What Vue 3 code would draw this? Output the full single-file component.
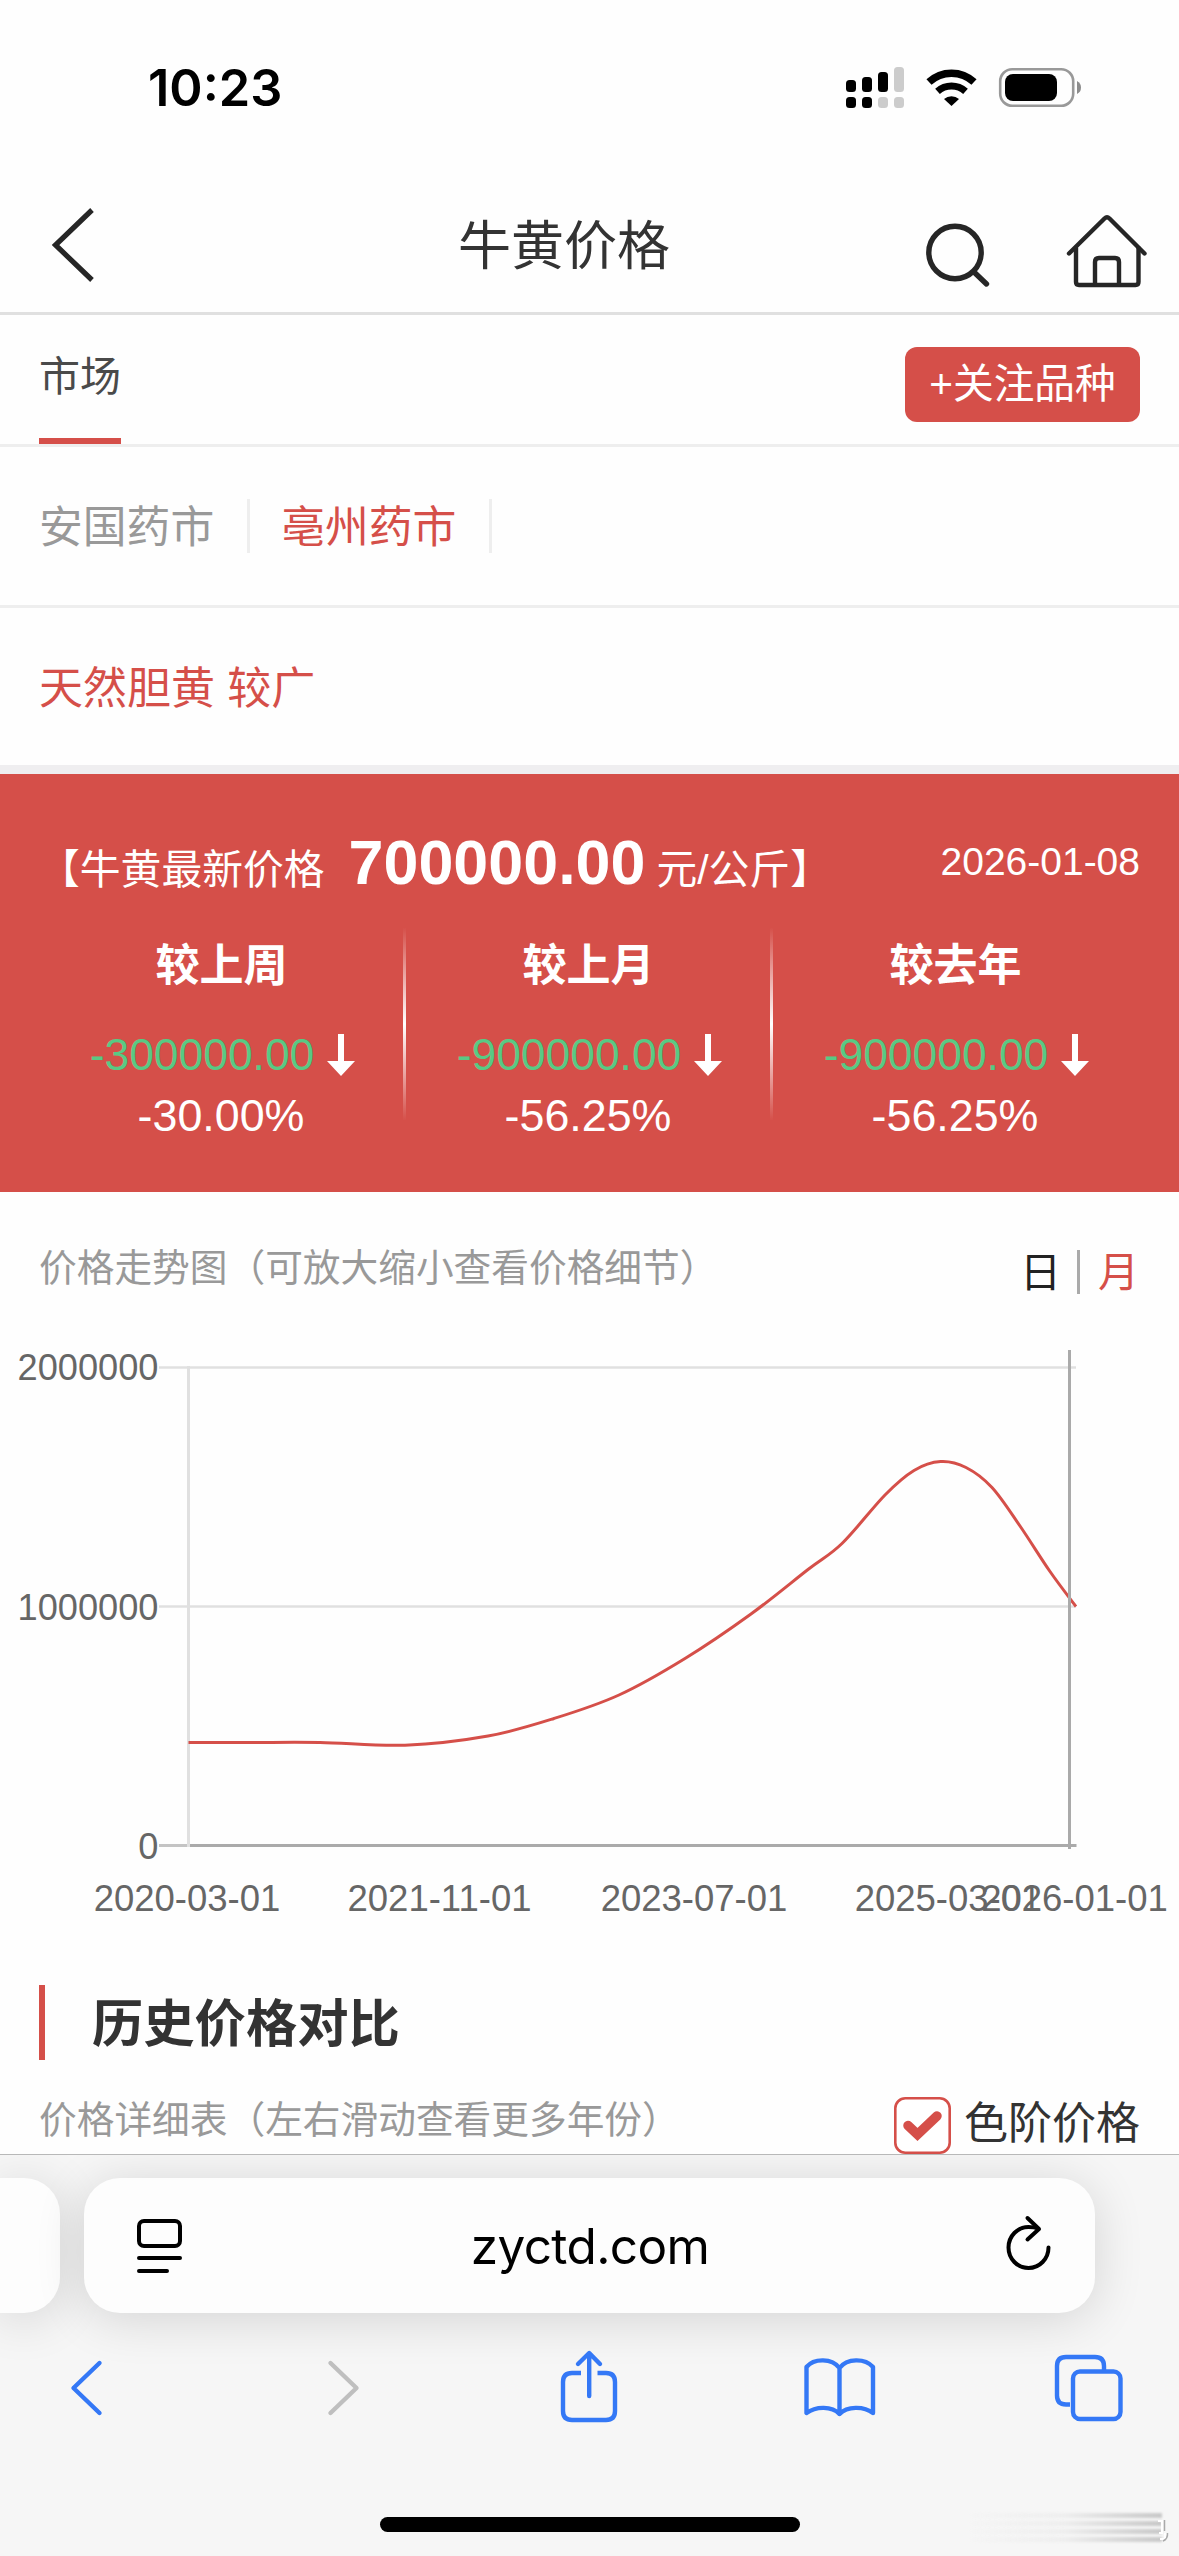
<template>
  <div class="page">
    <div class="status-bar">
      <span class="time">10:23</span>
      <svg class="status-icons" width="236" height="42" viewBox="846 66 236 42">
        <g fill="#000">
          <rect x="846" y="80" width="10" height="12" rx="3.5" />
          <rect x="862" y="77" width="10" height="15" rx="3.5" />
          <rect x="878" y="72" width="10" height="20" rx="3.5" />
          <rect x="846" y="97" width="10" height="11" rx="3.5" />
          <rect x="862" y="97" width="10" height="11" rx="3.5" />
        </g>
        <g fill="#ccc">
          <rect x="894" y="67" width="10" height="25" rx="3.5" />
          <rect x="878" y="97" width="10" height="11" rx="3.5" />
          <rect x="894" y="97" width="10" height="11" rx="3.5" />
        </g>
        <path d="M929 82 A33 33 0 0 1 974 82" fill="none" stroke="#000" stroke-width="7.5" />
        <path d="M937.5 91.3 A21 21 0 0 1 965.5 91.3" fill="none" stroke="#000" stroke-width="7" />
        <path d="M944 99 A11.5 11.5 0 0 1 959 99 L951.5 106 Z" fill="#000" />
        <rect x="1000.2" y="69.2" width="73" height="36.6" rx="12" fill="none" stroke="#999" stroke-width="2.6" />
        <rect x="1005" y="74" width="52" height="27" rx="8" fill="#000" />
        <path d="M1077 81 Q1081 83 1081 87.5 Q1081 92 1077 94 Z" fill="#8c8c8c" />
      </svg>
    </div>

    <header class="header">
      <svg class="back" width="46" height="78" viewBox="50 206 46 78">
        <path d="M92 210 L55.5 245 L92 280" fill="none" stroke="#262626" stroke-width="5.2" />
      </svg>
      <h1 class="title">牛黄价格</h1>
      <svg class="header-icons" width="226" height="78" viewBox="925 212 226 78">
        <g fill="none" stroke="#262626" stroke-width="5.4" stroke-linecap="round">
          <circle cx="955" cy="252.5" r="26.2" />
          <path d="M975 273 L986.5 284" />
        </g>
        <g fill="none" stroke="#262626" stroke-width="4.4" stroke-linecap="round" stroke-linejoin="round">
          <path d="M1069 253.5 L1104.5 218.5 Q1107 216 1109.5 218.5 L1144.5 253.5" />
          <path d="M1076 248 V282 Q1076 285 1079 285 H1135.5 Q1138.5 285 1138.5 282 V248" />
          <path d="M1095 284 V262 Q1095 258 1099 258 H1115 Q1119 258 1119 262 V284" />
        </g>
      </svg>
    </header>

    <div class="tabs">
      <div class="tab">市场</div>
      <button class="follow">+关注品种</button>
    </div>

    <div class="markets">
      <span
        v-for="market in markets"
        :key="market"
        :class="['market', { active: market === currentMarket }]"
      >{{ market }}</span>
    </div>

    <div class="specs">天然胆黄 较广</div>

    <section class="price-card">
      <div class="price-row">
        <div class="price-main">
          <span>【牛黄最新价格</span>
          <strong>700000.00</strong>
          <span>元/公斤】</span>
        </div>
        <span class="price-date">2026-01-08</span>
      </div>
      <div class="compare">
        <div v-for="item in compares" :key="item.label" class="compare-item">
          <div class="compare-label">{{ item.label }}</div>
          <div class="compare-value">
            <span>{{ item.value }}</span>
            <svg width="30" height="44" viewBox="0 0 30 44">
              <path d="M12 1 H18 V28 H29 L15 43 L1 28 H12 Z" fill="#fff" />
            </svg>
          </div>
          <div class="compare-percent">{{ item.percent }}</div>
        </div>
      </div>
    </section>

    <div class="chart-head">
      <span class="hint">价格走势图（可放大缩小查看价格细节）</span>
      <div class="switch">
        <span>日</span><i></i><span class="on">月</span>
      </div>
    </div>

    <svg class="chart" width="1179" height="600" viewBox="0 1340 1179 600">
      <g stroke="#e0e0e0" stroke-width="2.6">
        <line x1="159" y1="1367.5" x2="1076" y2="1367.5" />
        <line x1="159" y1="1606.5" x2="1076" y2="1606.5" />
      </g>
      <line x1="159" y1="1845.5" x2="189" y2="1845.5" stroke="#c4c4c4" stroke-width="3" />
      <line x1="189" y1="1845.5" x2="1076.5" y2="1845.5" stroke="#aaa" stroke-width="3" />
      <line x1="188.5" y1="1366" x2="188.5" y2="1847" stroke="#e0e0e0" stroke-width="3" />
      <path :d="linePath" fill="none" stroke="#d54f49" stroke-width="3" />
      <line x1="1069.5" y1="1350" x2="1069.5" y2="1849" stroke="#aaa" stroke-width="3" />
      <text
        v-for="tick in yTicks"
        :key="tick.label"
        x="158.5"
        :y="tick.y"
        class="y-label"
      >{{ tick.label }}</text>
      <text
        v-for="tick in xTicks"
        :key="tick.label"
        :x="tick.x"
        y="1910.5"
        class="x-label"
      >{{ tick.label }}</text>
    </svg>

    <h2 class="section-title">历史价格对比</h2>

    <div class="table-head">
      <span class="hint">价格详细表（左右滑动查看更多年份）</span>
      <label class="color-price">
        <svg width="57" height="57" viewBox="0 0 57 57">
          <rect x="1.3" y="1.3" width="54.4" height="54.4" rx="10" fill="#fff" stroke="#d54f49" stroke-width="2.6" />
          <path d="M14 28.5 L23.5 37.5 L43 19" fill="none" stroke="#d54f49" stroke-width="9.5" stroke-linecap="round" />
        </svg>
        <span>色阶价格</span>
      </label>
    </div>

    <footer class="toolbar">
      <div class="address-row">
        <div class="prev-tab"></div>
        <div class="address">
          <svg width="45" height="54" viewBox="0 0 45 54">
            <g fill="none" stroke="#000" stroke-width="4" stroke-linecap="round">
              <rect x="2" y="2" width="41" height="25" rx="5" />
              <path d="M2 39 H43 M2 52 H30" />
            </g>
          </svg>
          <span class="domain">zyctd.com</span>
          <svg class="reload" width="46" height="56" viewBox="0 0 46 56">
            <g fill="none" stroke="#000" stroke-width="4" stroke-linecap="round" stroke-linejoin="round">
              <path d="M42.5 32.5 A20 20.5 0 1 1 22.5 12 Q28 12 32 13.5" />
              <path d="M21.5 3 L33 14 L21.5 24.5" />
            </g>
          </svg>
        </div>
      </div>
      <svg class="nav" width="1179" height="80" viewBox="0 2346 1179 80">
        <g fill="none" stroke="#3478f6" stroke-width="4.4" stroke-linecap="round" stroke-linejoin="round">
          <path d="M99.5 2363 L73.5 2388 L99.5 2413" />
          <path d="M330.5 2363 L356.5 2388 L330.5 2413" stroke="#bfbfbf" />
          <path d="M581 2373 H572 Q563 2373 563 2382 V2411 Q563 2420 572 2420 H606 Q615 2420 615 2411 V2382 Q615 2373 606 2373 H597.5" stroke-linecap="butt" />
          <path d="M589.2 2396 V2354 M578 2364 L589.2 2353 L600 2364" />
          <path d="M839.5 2414 C832 2406 816 2406 806.5 2413 V2367 C814 2358 832 2358 839.5 2368 C847 2358 865 2358 873 2367 V2413 C864 2406 847 2406 839.5 2414 Z M839.5 2368 V2414" />
          <path d="M1070 2404.5 H1066 Q1057 2404.5 1057 2395.5 V2366 Q1057 2357 1066 2357 H1095 Q1104 2357 1104 2366 V2370" stroke-linecap="butt" />
          <rect x="1073" y="2371.5" width="47.5" height="47.5" rx="7" />
        </g>
      </svg>
      <div class="home-row">
        <div class="home-indicator"></div>
        <div class="smudge">
          <i></i><i></i><i></i><i></i>
          <svg width="14" height="28" viewBox="0 0 14 28">
            <path d="M2 4 H6 V16 H3 M4 22 H9 V16" fill="none" stroke="#fff" stroke-width="2" />
            <path d="M8.5 3 V14 M11.5 16 Q12 22 7 24" fill="none" stroke="#aaa" stroke-width="1.5" />
          </svg>
        </div>
      </div>
    </footer>
  </div>
</template>

<script setup>
import { computed, ref } from 'vue';

const markets = ['安国药市', '亳州药市'];
const currentMarket = ref('亳州药市');

const compares = [
  { label: '较上周', value: '-300000.00', percent: '-30.00%' },
  { label: '较上月', value: '-900000.00', percent: '-56.25%' },
  { label: '较去年', value: '-900000.00', percent: '-56.25%' },
];

const yTicks = [
  { label: '2000000', y: 1380 },
  { label: '1000000', y: 1619.5 },
  { label: '0', y: 1858.5 },
];

const xTicks = [
  { label: '2020-03-01', x: 187 },
  { label: '2021-11-01', x: 439.5 },
  { label: '2023-07-01', x: 694 },
  { label: '2025-03-01', x: 948 },
  { label: '2026-01-01', x: 1074.5 },
];

const points = [
  [188.5, 1742.5], [250, 1742.5], [320, 1742.5], [405, 1745.2], [488, 1736],
  [554, 1718.5], [619, 1695], [685, 1658.5], [751, 1614], [808, 1569.5],
  [842, 1543.5], [885, 1495], [914, 1470.5], [940.6, 1461.6], [966, 1467.5],
  [992, 1487.5], [1020, 1526], [1050, 1571.5], [1076, 1606.5],
];

// 平滑曲线，经过每个价格点
const linePath = computed(() => {
  let d = `M${points[0][0]} ${points[0][1]}`;
  for (let i = 0; i < points.length - 1; i++) {
    const p0 = points[i - 1] || points[i];
    const p1 = points[i];
    const p2 = points[i + 1];
    const p3 = points[i + 2] || p2;
    d += ` C${p1[0] + (p2[0] - p0[0]) / 6} ${p1[1] + (p2[1] - p0[1]) / 6}`;
    d += ` ${p2[0] - (p3[0] - p1[0]) / 6} ${p2[1] - (p3[1] - p1[1]) / 6}`;
    d += ` ${p2[0]} ${p2[1]}`;
  }
  return d;
});
</script>

<style>
body {
  margin: 0;
  background: #fff;
}
</style>

<style scoped>
.page {
  display: flex;
  flex-direction: column;
  width: 1179px;
  height: 2556px;
  overflow: hidden;
  background: #fefefe;
  color: #333;
  font-family: "Liberation Sans", "Noto Sans CJK SC", sans-serif;
}

.page > * {
  flex-shrink: 0;
  box-sizing: border-box;
}

.page svg {
  display: block;
  flex-shrink: 0;
}

.status-bar {
  display: flex;
  justify-content: space-between;
  height: 170px;
  padding: 66px 97px 0 148px;
}

.time {
  font: 600 50.5px/44px Inter, sans-serif;
  color: #000;
}

.header {
  display: grid;
  grid-template-columns: 250px 528px 323px;
  height: 145px;
  padding: 0 28px 0 50px;
  border-bottom: 3px solid #e0e0e0;
}

.back {
  margin-top: 36px;
}

.title {
  margin: 47px 0 0;
  font-size: 53px;
  font-weight: 400;
  line-height: 60px;
  text-align: center;
}

.header-icons {
  margin: 42px 0 0 auto;
}

.tabs {
  display: flex;
  justify-content: space-between;
  height: 132px;
  padding: 0 39px;
  border-bottom: 3px solid #eee;
}

.tab {
  box-sizing: border-box;
  height: 129px;
  padding-top: 32px;
  border-bottom: 6px solid #d54f49;
  font-size: 41px;
  line-height: 60px;
  color: #4a4a4a;
}

.follow {
  width: 235px;
  height: 75px;
  margin-top: 32px;
  padding: 0;
  border: none;
  border-radius: 12px;
  background: #d54f49;
  color: #fff;
  font-family: inherit;
  font-size: 40.7px;
  line-height: 75px;
}

.markets {
  display: flex;
  align-items: center;
  height: 161px;
  padding: 0 39px;
  border-bottom: 3px solid #eee;
}

.market {
  height: 54px;
  margin-right: 31px;
  padding-right: 33px;
  border-right: 3px solid #eee;
  font-size: 43.8px;
  line-height: 58px;
  color: #999;
}

.market.active {
  color: #d54f49;
}

.specs {
  height: 166px;
  padding: 2px 39px 0;
  border-bottom: 9px solid #efeef0;
  font-size: 44px;
  line-height: 157px;
  color: #d54f49;
}

.price-card {
  height: 418px;
  padding: 60px 39px 0;
  background: #d54f49;
  color: #fff;
}

.price-row {
  display: flex;
  justify-content: space-between;
  height: 94px;
}

.price-main {
  display: flex;
  align-items: baseline;
  margin-top: -2px;
  font-size: 40.8px;
  line-height: 60px;
}

.price-main strong {
  margin: 0 11px 0 24px;
  font-size: 62.8px;
}

.price-date {
  font-size: 39px;
  line-height: 55px;
}

.compare {
  display: grid;
  grid-template-columns: repeat(3, 367px);
}

.compare-item {
  display: flex;
  flex-direction: column;
  align-items: center;
  height: 192px;
  border-right: 3px solid;
  border-image: linear-gradient(transparent, #fff 50%, transparent) 1;
  box-sizing: border-box;
}

.compare-item:last-child {
  border-image: none;
  border-color: transparent;
}

.compare-label {
  margin: 8px 0 0 1px;
  font-size: 44px;
  font-weight: 700;
  line-height: 60px;
}

.compare-value {
  display: flex;
  align-items: center;
  gap: 12px;
  height: 60px;
  margin: 34px 0 0 4px;
  font-size: 44.4px;
  color: #59c984;
}

.compare-percent {
  margin-top: 3px;
  font-size: 44.8px;
  line-height: 64px;
}

.chart-head {
  display: flex;
  justify-content: space-between;
  height: 148px;
  padding: 46px 40px 0 39px;
}

.hint {
  font-size: 37.7px;
  line-height: 60px;
  color: #999;
}

.switch {
  display: flex;
  align-items: center;
  height: 62px;
  font-size: 41px;
  color: #222;
}

.switch i {
  width: 3px;
  height: 44px;
  margin: 5px 18px 0 16px;
  background: #aaa;
}

.switch .on {
  color: #d54f49;
}

.chart text {
  font-size: 36.5px;
  fill: #666;
}

.chart .y-label {
  font-size: 36.2px;
  text-anchor: end;
}

.chart .x-label {
  text-anchor: middle;
}

.section-title {
  height: 75px;
  margin: 45px 0 0 39px;
  padding-left: 47px;
  border-left: 6px solid #d54f49;
  font-size: 51.3px;
  font-weight: 700;
  line-height: 80px;
}

.table-head {
  display: flex;
  justify-content: space-between;
  height: 94px;
  padding: 30px 39px 0;
}

.color-price {
  display: flex;
  gap: 13px;
  padding-top: 7px;
  font-size: 44px;
  line-height: 54px;
}

.toolbar {
  display: flex;
  flex-direction: column;
  height: 402px;
  border-top: 1px solid #b8b8b8;
  background: #f6f6f6;
  overflow: hidden;
}

.address-row {
  display: flex;
  flex-shrink: 0;
  gap: 24px;
  height: 191px;
  padding-top: 23px;
  box-sizing: border-box;
}

.prev-tab,
.address {
  height: 135px;
  background: #fdfdfd;
  box-shadow: 0 6px 50px rgba(0, 0, 0, 0.14);
}

.prev-tab {
  width: 60px;
  border-radius: 0 36px 36px 0;
}

.address {
  display: flex;
  align-items: center;
  justify-content: space-between;
  width: 1011px;
  padding: 0 43px 0 53px;
  border-radius: 36px;
  box-sizing: border-box;
  font-family: Inter, sans-serif;
  font-size: 49.5px;
  color: #000;
}

.domain {
  margin-right: 8px;
  letter-spacing: -0.6px;
}

.reload {
  margin-top: -5px;
}

.home-row {
  display: flex;
  flex-shrink: 0;
  height: 39px;
  margin-top: 91px;
}

.home-indicator {
  width: 420px;
  height: 15px;
  margin-left: 380px;
  border-radius: 8px;
  background: #000;
}

.smudge {
  position: relative;
  display: flex;
  flex-direction: column;
  gap: 3px;
  width: 242px;
  margin: -4px 0 0 120px;
}

.smudge i {
  height: 5px;
  background: linear-gradient(90deg, transparent 20%, #eee 60%, #c8c8c8);
  filter: blur(1px);
}

.smudge svg {
  position: absolute;
  right: -8px;
  top: 4px;
}
</style>
